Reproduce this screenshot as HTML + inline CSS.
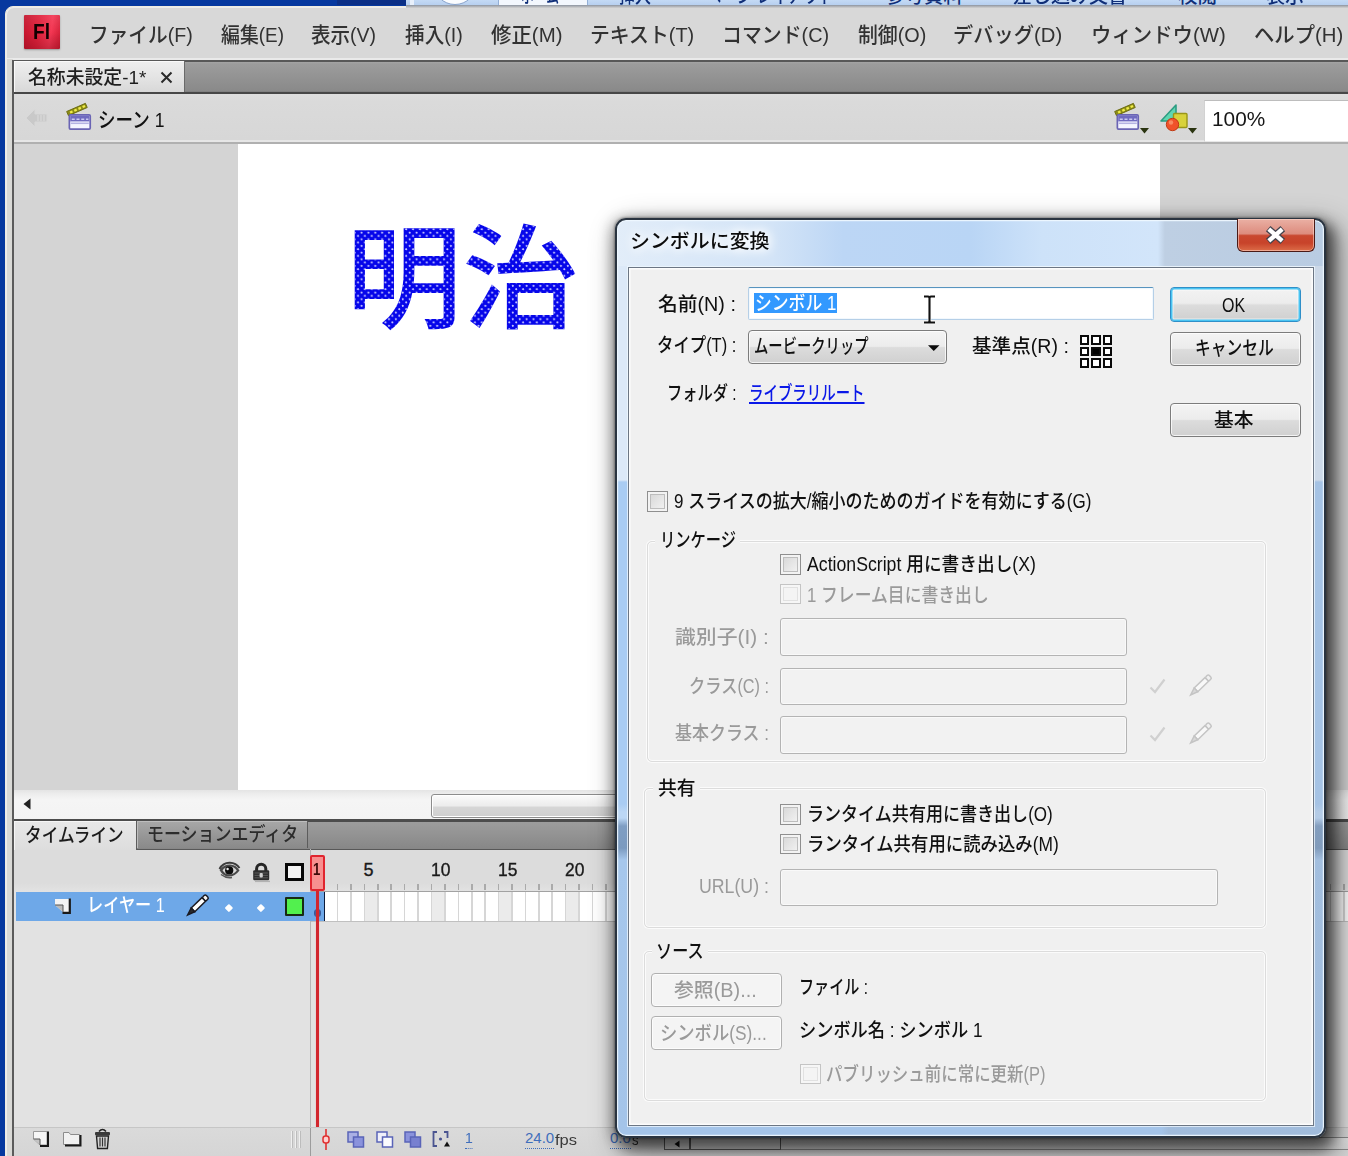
<!DOCTYPE html>
<html lang="ja"><head><meta charset="utf-8"><title>Flash</title>
<style>
html,body{margin:0;padding:0}
body{width:1348px;height:1156px;overflow:hidden;position:relative;background:#06389f;font-family:"Liberation Sans","Noto Sans CJK JP",sans-serif}
div{position:absolute;box-sizing:border-box}
svg{position:absolute;overflow:visible}
span.t{font-weight:500;position:absolute;white-space:pre;transform-origin:0 50%;display:block}
.btn{border:1.3px solid #7c7c7c;border-radius:4px;background:linear-gradient(#f4f4f4 0%,#ececec 48%,#dcdcdc 52%,#d0d0d0 100%);box-shadow:inset 0 0 0 1px rgba(255,255,255,.75)}
.inp{border:1.6px solid #b4b4b4;border-radius:3px;background:#f2f2f2;box-shadow:inset 0 0 0 1px #f9f9f9}
.chk{border:1px solid #8f8f8f;background:linear-gradient(135deg,#d4d4d4,#f6f6f6);box-shadow:inset 0 0 0 2px #f3f3f3, inset 0 0 0 3px #bdbdbd}
.chk.dis{border-color:#c4c4c4;background:#f4f4f4;box-shadow:inset 0 0 0 2px #f6f6f6, inset 0 0 0 3px #e1e1e1}
.grp{border:1px solid #dcdcdc;border-radius:5px;box-shadow:inset 0 0 0 1px #fbfbfb, 0 0 0 1px #fbfbfb}

</style></head>
<body>
<div style="left:0px;top:0px;width:1348px;height:8px;overflow:hidden"><div style="left:337px;top:0px;width:69px;height:5px;background:#0b2f86"></div><div style="left:406px;top:0px;width:950px;height:5.5px;background:linear-gradient(#c4daf5,#b4cdee)"></div><div style="left:410px;top:0px;width:4px;height:5px;background:#e8f0fb"></div><div style="left:433px;top:-39px;width:44px;height:44px;background:#fafcff;border-radius:50%;border:1px solid #8aa4cc"></div><div style="left:498px;top:-20px;width:90px;height:30px;background:#f3f7fd;border:1px solid #93afd6;border-radius:3px"></div><span class="t " id="t0" style="left:521px;top:-16.7px;height:27px;line-height:27px;font-size:19.5px;color:#0f2e78;transform:scaleX(0.6552);">ホーム</span><span class="t " id="t1" style="left:619px;top:-16.7px;height:27px;line-height:27px;font-size:19.5px;color:#0f2e78;transform:scaleX(0.8205);">挿入</span><span class="t " id="t2" style="left:706px;top:-16.7px;height:27px;line-height:27px;font-size:19.5px;color:#0f2e78;transform:scaleX(0.7950);">ページ レイアウト</span><span class="t " id="t3" style="left:885px;top:-16.7px;height:27px;line-height:27px;font-size:19.5px;color:#0f2e78;transform:scaleX(1.0000);">参考資料</span><span class="t " id="t4" style="left:1013px;top:-16.7px;height:27px;line-height:27px;font-size:19.5px;color:#0f2e78;transform:scaleX(0.9744);">差し込み文書</span><span class="t " id="t5" style="left:1178px;top:-16.7px;height:27px;line-height:27px;font-size:19.5px;color:#0f2e78;transform:scaleX(1.0000);">校閲</span><span class="t " id="t6" style="left:1266px;top:-16.7px;height:27px;line-height:27px;font-size:19.5px;color:#0f2e78;transform:scaleX(0.9744);">表示</span></div>
<div style="left:5.3px;top:5.8px;width:1400px;height:1200px;background:#d8d8d8;border-radius:8px 0 0 0;border:1.4px solid #efebe0;box-shadow:inset 1px 1px 0 #ececec"></div><div style="left:406px;top:5.4px;width:950px;height:2.8px;background:linear-gradient(#8c94a0,#b4b6ba 55%,#d2d2d2)"></div><div style="left:23.7px;top:14.8px;width:36.5px;height:34.6px;background:linear-gradient(rgba(255,255,255,.08),rgba(0,0,0,0) 50%,rgba(90,0,10,.28)),linear-gradient(98deg,#c2142c 0,#e0223c 40%,#f43854 72%,#d01c34 100%);box-shadow:0 1px 2px rgba(0,0,0,.3);border-radius:1px"></div><span class="t " id="t7" style="left:32.6px;top:16.1px;height:31px;line-height:31px;font-size:22.5px;color:#120000;transform:scaleX(0.8500);font-weight:bold">Fl</span><span class="t " id="t8" style="left:89px;top:20px;height:29px;line-height:29px;font-size:21px;color:#323232;transform:scaleX(0.9369);">ファイル(F)</span><span class="t " id="t9" style="left:221px;top:20px;height:29px;line-height:29px;font-size:21px;color:#323232;transform:scaleX(0.9000);">編集(E)</span><span class="t " id="t10" style="left:311px;top:20px;height:29px;line-height:29px;font-size:21px;color:#323232;transform:scaleX(0.9286);">表示(V)</span><span class="t " id="t11" style="left:405px;top:20px;height:29px;line-height:29px;font-size:21px;color:#323232;transform:scaleX(0.9355);">挿入(I)</span><span class="t " id="t12" style="left:491px;top:20px;height:29px;line-height:29px;font-size:21px;color:#323232;transform:scaleX(0.9726);">修正(M)</span><span class="t " id="t13" style="left:590px;top:20px;height:29px;line-height:29px;font-size:21px;color:#323232;transform:scaleX(0.9455);">テキスト(T)</span><span class="t " id="t14" style="left:722px;top:20px;height:29px;line-height:29px;font-size:21px;color:#323232;transform:scaleX(0.9469);">コマンド(C)</span><span class="t " id="t15" style="left:858px;top:20px;height:29px;line-height:29px;font-size:21px;color:#323232;transform:scaleX(0.9444);">制御(O)</span><span class="t " id="t16" style="left:953px;top:20px;height:29px;line-height:29px;font-size:21px;color:#323232;transform:scaleX(0.9646);">デバッグ(D)</span><span class="t " id="t17" style="left:1091px;top:20px;height:29px;line-height:29px;font-size:21px;color:#323232;transform:scaleX(0.9712);">ウィンドウ(W)</span><span class="t " id="t18" style="left:1254px;top:20px;height:29px;line-height:29px;font-size:21px;color:#323232;transform:scaleX(0.9674);">ヘルプ(H)</span><div style="left:7px;top:57.5px;width:1400px;height:36.5px;background:linear-gradient(#eaeaea 0,#eaeaea 2px,#585858 2.2px,#585858 3.8px,#a4a4a4 4.2px,#9c9c9c 6px,#898989 33.4px,#474747 34.2px,#474747 36.5px)"></div><div style="left:7px;top:59px;width:6px;height:1100px;background:#d9d9d6"></div><div style="left:12px;top:60px;width:2px;height:1100px;background:#5b5b5b"></div><div style="left:14px;top:61.3px;width:171px;height:31px;background:linear-gradient(#efefef,#e2e2e2 60%,#d8d8d8);border-right:1px solid #6a6a6a;box-shadow:inset 1px 1px 0 #fafafa"></div><span class="t " id="t19" style="left:28px;top:64px;height:27px;line-height:27px;font-size:19px;color:#1e1e1e;transform:scaleX(0.9916);">名称未設定-1*</span><svg style="left:160px;top:71px" width="13" height="13" viewBox="0 0 13 13"><path d="M1.5 1.5 L11.5 11.5 M11.5 1.5 L1.5 11.5" stroke="#2a2a2a" stroke-width="2" fill="none"/></svg><div style="left:14px;top:94px;width:1400px;height:49.5px;background:linear-gradient(#dedede 0,#dadada 8px,#d7d7d7 45.5px,#e6e6e6 46px,#e6e6e6 47.5px,#b0b0b0 47.8px,#b0b0b0 49.5px)"></div><svg style="left:25px;top:106.8px" width="24" height="22" viewBox="0 0 24 22"><path d="M1 11 L10 2 L10 7 L22 7 L22 15 L10 15 L10 20 Z" fill="#c9c9c9" stroke="#d8d8d8" stroke-width="1"/><path d="M13 8v6M16 8v6M19 8v6" stroke="#dcdcdc" stroke-width="1"/></svg><svg style="left:66.5px;top:103px" width="25.6" height="27.5" viewBox="0 0 27 29"><g transform="rotate(-23.5 2 13.4)"><rect x="1.6" y="8.4" width="21.6" height="4.8" fill="#8c8c16" stroke="#6a6a0e" stroke-width=".9"/><path d="M4.5 10.8h2.8M9.3 10.8h2.8M14.1 10.8h2.8M18.9 10.8h2.8" stroke="#f0ec48" stroke-width="2.4"/></g><rect x="2.5" y="12.5" width="22" height="15" rx="1.2" fill="#f4f4ff" stroke="#6a64b4" stroke-width="1.8"/><rect x="3.4" y="13.2" width="20.2" height="6.2" fill="#6f6ac0"/><path d="M5 17.2h3.2M10 17.2h3.2M15 17.2h3.2M20 17.2h2.6" stroke="#c9c8f0" stroke-width="1.6"/><rect x="4" y="20.6" width="19" height="1.6" fill="#b4b2e2"/></svg><span class="t " id="t20" style="left:98px;top:105px;height:29px;line-height:29px;font-size:21px;color:#111;transform:scaleX(0.8354);">シーン 1</span><svg style="left:1114.6px;top:103.4px" width="25.6" height="27.5" viewBox="0 0 27 29"><g transform="rotate(-23.5 2 13.4)"><rect x="1.6" y="8.4" width="21.6" height="4.8" fill="#8c8c16" stroke="#6a6a0e" stroke-width=".9"/><path d="M4.5 10.8h2.8M9.3 10.8h2.8M14.1 10.8h2.8M18.9 10.8h2.8" stroke="#f0ec48" stroke-width="2.4"/></g><rect x="2.5" y="12.5" width="22" height="15" rx="1.2" fill="#f4f4ff" stroke="#6a64b4" stroke-width="1.8"/><rect x="3.4" y="13.2" width="20.2" height="6.2" fill="#6f6ac0"/><path d="M5 17.2h3.2M10 17.2h3.2M15 17.2h3.2M20 17.2h2.6" stroke="#c9c8f0" stroke-width="1.6"/><rect x="4" y="20.6" width="19" height="1.6" fill="#b4b2e2"/></svg><svg style="left:1140px;top:128px" width="9" height="6" viewBox="0 0 9 6"><path d="M0 0h9L4.5 5.5z" fill="#2a3410"/></svg><svg style="left:1159px;top:103px" width="32" height="30" viewBox="0 0 32 30"><path d="M2 18 L17 2 L17 18 Z" fill="#5fd6b0" stroke="#2d9c82" stroke-width="1.6" stroke-linejoin="round"/><rect x="14.5" y="10.5" width="13.5" height="14" rx="1" fill="#d8d23a" stroke="#9a9618" stroke-width="1.4"/><circle cx="13.5" cy="21.5" r="6.2" fill="#f0522a" stroke="#c03a14" stroke-width="1"/><circle cx="12" cy="19.5" r="2.2" fill="#fb9a70" opacity=".8"/></svg><svg style="left:1188px;top:128px" width="9" height="6" viewBox="0 0 9 6"><path d="M0 0h9L4.5 5.5z" fill="#2a3410"/></svg><div style="left:1204px;top:100px;width:200px;height:42px;background:#fff;border:1px solid #e8e8e8;border-top-color:#bdbdbd;border-left-color:#d2d2d2"></div><span class="t " id="t21" style="left:1211.5px;top:104.3px;height:29px;line-height:29px;font-size:21px;color:#161616;transform:scaleX(0.9907);">100%</span><div style="left:14px;top:143.5px;width:1400px;height:646.5px;background:#d4d4d4"></div><div style="left:238px;top:143.5px;width:922px;height:646.5px;background:#fff"></div><span class="t " id="t22" style="left:346px;top:190.5px;height:158px;line-height:158px;font-size:112.5px;color:transparent;transform:scaleX(1.0333);background:radial-gradient(circle at 25% 25%,#d4d4ff 0,#d4d4ff 0.55px,rgba(190,190,255,0) 1.35px) 0 0/6.66px 6.66px,radial-gradient(circle at 75% 75%,#d4d4ff 0,#d4d4ff 0.55px,rgba(190,190,255,0) 1.35px) 0 0/6.66px 6.66px,#0606ea;-webkit-background-clip:text;background-clip:text;font-family:'Noto Sans CJK JP',sans-serif;font-weight:500">明治</span><div style="left:14px;top:790px;width:1400px;height:29px;background:linear-gradient(#e4e4e4 0,#ededed 4px,#f5f5f5 10px,#f3f3f3 100%)"></div><svg style="left:23px;top:798px" width="8" height="12" viewBox="0 0 8 12"><path d="M7.5 0.5 L7.5 11.5 L0.5 6 Z" fill="#222"/></svg><div style="left:431px;top:794px;width:860px;height:24px;background:linear-gradient(#fbfbfb,#ececec 50%,#d6d6d6 55%,#cfcfcf);border:1px solid #8c8c8c;border-radius:3px;box-shadow:inset 0 0 0 1px #fff"></div><div style="left:14px;top:818.5px;width:1400px;height:31.8px;background:linear-gradient(#4c4c4c 0,#4c4c4c 2.6px,#9c9c9c 3.4px,#939393 50%,#878787 29.6px,#585858 30.2px,#585858 31.8px)"></div><div style="left:14px;top:820.7px;width:123px;height:29.8px;background:linear-gradient(#e8e8e8,#dddddd);box-shadow:inset 1px 1px 0 #f6f6f6;border-right:1px solid #5c5c5c"></div><span class="t " id="t23" style="left:25px;top:821.5px;height:27px;line-height:27px;font-size:19px;color:#1c1c1c;transform:scaleX(0.8761);">タイムライン</span><div style="left:137px;top:820.7px;width:171px;height:27.5px;background:linear-gradient(#a8a8a8,#959595 60%,#8a8a8a);border-right:1px solid #5c5c5c;box-shadow:inset 1px 1px 0 #bdbdbd"></div><span class="t " id="t24" style="left:147px;top:821px;height:27px;line-height:27px;font-size:19px;color:#2c2c2c;transform:scaleX(0.8935);">モーションエディタ</span><div style="left:14px;top:850.3px;width:1400px;height:41.7px;background:linear-gradient(#dcdcdc 0,#dcdcdc 33px,#e2e2e2 41px)"></div><div style="left:14px;top:892px;width:1400px;height:235px;background:#e2e2e2"></div><svg style="left:218px;top:861px" width="23" height="18" viewBox="0 0 23 18"><path d="M1.5 8 Q5 1.5 12 1.8 Q18 2 21.5 7" stroke="#3c3c3c" stroke-width="2" fill="none"/><path d="M1.5 9 Q6 3.5 12 3.6 Q18 3.8 21.5 9.5 Q17 15.5 11 15.6 Q5 15.5 1.5 9Z" fill="#484848"/><path d="M4.5 9.3 Q8 5.6 12 5.6 Q16 5.8 18.8 9.6 Q15.5 13.6 11.2 13.6 Q7 13.4 4.5 9.3Z" fill="#d8d8d8"/><circle cx="11.2" cy="9.4" r="4.1" fill="#0c0c0c"/><circle cx="9.6" cy="8" r="1.2" fill="#e8e8e8"/><path d="M3 13.5 Q8 17.5 14 16.5" stroke="#555" stroke-width="1.4" fill="none"/></svg><svg style="left:252px;top:861.5px" width="19" height="20" viewBox="0 0 19 20"><path d="M4.6 9 V6.8 a4.6 4.6 0 0 1 9.2 0 V9" fill="none" stroke="#262626" stroke-width="3"/><rect x="1.2" y="8.2" width="16" height="10" rx="1.2" fill="#2e2e2e"/><path d="M2.5 11h13.4M2.5 13.4h13.4M2.5 15.8h13.4" stroke="#5c5c5c" stroke-width="1"/><rect x="7.6" y="11" width="3.2" height="4.6" rx="1" fill="#d0d0d0"/><path d="M3 19.4h15" stroke="#a8a8a8" stroke-width="1.4" opacity=".8"/></svg><div style="left:285px;top:863.3px;width:18.6px;height:17.6px;border:3.6px solid #080808;background:#f4f4f4"></div><div style="left:323.32px;top:883.8px;width:1.6px;height:6.4px;background:#aaaaaa"></div><div style="left:336.74px;top:883.8px;width:1.6px;height:6.4px;background:#aaaaaa"></div><div style="left:350.16px;top:883.8px;width:1.6px;height:6.4px;background:#aaaaaa"></div><div style="left:363.58px;top:883.8px;width:1.6px;height:6.4px;background:#aaaaaa"></div><div style="left:377px;top:883.8px;width:1.6px;height:6.4px;background:#aaaaaa"></div><div style="left:390.42px;top:883.8px;width:1.6px;height:6.4px;background:#aaaaaa"></div><div style="left:403.84px;top:883.8px;width:1.6px;height:6.4px;background:#aaaaaa"></div><div style="left:417.26px;top:883.8px;width:1.6px;height:6.4px;background:#aaaaaa"></div><div style="left:430.68px;top:883.8px;width:1.6px;height:6.4px;background:#aaaaaa"></div><div style="left:444.1px;top:883.8px;width:1.6px;height:6.4px;background:#aaaaaa"></div><div style="left:457.52px;top:883.8px;width:1.6px;height:6.4px;background:#aaaaaa"></div><div style="left:470.94px;top:883.8px;width:1.6px;height:6.4px;background:#aaaaaa"></div><div style="left:484.36px;top:883.8px;width:1.6px;height:6.4px;background:#aaaaaa"></div><div style="left:497.78px;top:883.8px;width:1.6px;height:6.4px;background:#aaaaaa"></div><div style="left:511.2px;top:883.8px;width:1.6px;height:6.4px;background:#aaaaaa"></div><div style="left:524.62px;top:883.8px;width:1.6px;height:6.4px;background:#aaaaaa"></div><div style="left:538.04px;top:883.8px;width:1.6px;height:6.4px;background:#aaaaaa"></div><div style="left:551.46px;top:883.8px;width:1.6px;height:6.4px;background:#aaaaaa"></div><div style="left:564.88px;top:883.8px;width:1.6px;height:6.4px;background:#aaaaaa"></div><div style="left:578.3px;top:883.8px;width:1.6px;height:6.4px;background:#aaaaaa"></div><div style="left:591.72px;top:883.8px;width:1.6px;height:6.4px;background:#aaaaaa"></div><div style="left:605.14px;top:883.8px;width:1.6px;height:6.4px;background:#aaaaaa"></div><div style="left:618.56px;top:883.8px;width:1.6px;height:6.4px;background:#aaaaaa"></div><div style="left:631.98px;top:883.8px;width:1.6px;height:6.4px;background:#aaaaaa"></div><div style="left:645.4px;top:883.8px;width:1.6px;height:6.4px;background:#aaaaaa"></div><div style="left:658.82px;top:883.8px;width:1.6px;height:6.4px;background:#aaaaaa"></div><div style="left:672.24px;top:883.8px;width:1.6px;height:6.4px;background:#aaaaaa"></div><div style="left:685.66px;top:883.8px;width:1.6px;height:6.4px;background:#aaaaaa"></div><div style="left:699.08px;top:883.8px;width:1.6px;height:6.4px;background:#aaaaaa"></div><div style="left:712.5px;top:883.8px;width:1.6px;height:6.4px;background:#aaaaaa"></div><div style="left:725.92px;top:883.8px;width:1.6px;height:6.4px;background:#aaaaaa"></div><div style="left:739.34px;top:883.8px;width:1.6px;height:6.4px;background:#aaaaaa"></div><div style="left:752.76px;top:883.8px;width:1.6px;height:6.4px;background:#aaaaaa"></div><div style="left:766.18px;top:883.8px;width:1.6px;height:6.4px;background:#aaaaaa"></div><div style="left:779.6px;top:883.8px;width:1.6px;height:6.4px;background:#aaaaaa"></div><div style="left:793.02px;top:883.8px;width:1.6px;height:6.4px;background:#aaaaaa"></div><div style="left:806.44px;top:883.8px;width:1.6px;height:6.4px;background:#aaaaaa"></div><div style="left:819.86px;top:883.8px;width:1.6px;height:6.4px;background:#aaaaaa"></div><div style="left:833.28px;top:883.8px;width:1.6px;height:6.4px;background:#aaaaaa"></div><div style="left:846.7px;top:883.8px;width:1.6px;height:6.4px;background:#aaaaaa"></div><div style="left:860.12px;top:883.8px;width:1.6px;height:6.4px;background:#aaaaaa"></div><div style="left:873.54px;top:883.8px;width:1.6px;height:6.4px;background:#aaaaaa"></div><div style="left:886.96px;top:883.8px;width:1.6px;height:6.4px;background:#aaaaaa"></div><div style="left:900.38px;top:883.8px;width:1.6px;height:6.4px;background:#aaaaaa"></div><div style="left:913.8px;top:883.8px;width:1.6px;height:6.4px;background:#aaaaaa"></div><div style="left:927.22px;top:883.8px;width:1.6px;height:6.4px;background:#aaaaaa"></div><div style="left:940.64px;top:883.8px;width:1.6px;height:6.4px;background:#aaaaaa"></div><div style="left:954.06px;top:883.8px;width:1.6px;height:6.4px;background:#aaaaaa"></div><div style="left:967.48px;top:883.8px;width:1.6px;height:6.4px;background:#aaaaaa"></div><div style="left:980.9px;top:883.8px;width:1.6px;height:6.4px;background:#aaaaaa"></div><div style="left:994.32px;top:883.8px;width:1.6px;height:6.4px;background:#aaaaaa"></div><div style="left:1007.74px;top:883.8px;width:1.6px;height:6.4px;background:#aaaaaa"></div><div style="left:1021.16px;top:883.8px;width:1.6px;height:6.4px;background:#aaaaaa"></div><div style="left:1034.58px;top:883.8px;width:1.6px;height:6.4px;background:#aaaaaa"></div><div style="left:1048px;top:883.8px;width:1.6px;height:6.4px;background:#aaaaaa"></div><div style="left:1061.42px;top:883.8px;width:1.6px;height:6.4px;background:#aaaaaa"></div><div style="left:1074.84px;top:883.8px;width:1.6px;height:6.4px;background:#aaaaaa"></div><div style="left:1088.26px;top:883.8px;width:1.6px;height:6.4px;background:#aaaaaa"></div><div style="left:1101.68px;top:883.8px;width:1.6px;height:6.4px;background:#aaaaaa"></div><div style="left:1115.1px;top:883.8px;width:1.6px;height:6.4px;background:#aaaaaa"></div><div style="left:1128.52px;top:883.8px;width:1.6px;height:6.4px;background:#aaaaaa"></div><div style="left:1141.94px;top:883.8px;width:1.6px;height:6.4px;background:#aaaaaa"></div><div style="left:1155.36px;top:883.8px;width:1.6px;height:6.4px;background:#aaaaaa"></div><div style="left:1168.78px;top:883.8px;width:1.6px;height:6.4px;background:#aaaaaa"></div><div style="left:1182.2px;top:883.8px;width:1.6px;height:6.4px;background:#aaaaaa"></div><div style="left:1195.62px;top:883.8px;width:1.6px;height:6.4px;background:#aaaaaa"></div><div style="left:1209.04px;top:883.8px;width:1.6px;height:6.4px;background:#aaaaaa"></div><div style="left:1222.46px;top:883.8px;width:1.6px;height:6.4px;background:#aaaaaa"></div><div style="left:1235.88px;top:883.8px;width:1.6px;height:6.4px;background:#aaaaaa"></div><div style="left:1249.3px;top:883.8px;width:1.6px;height:6.4px;background:#aaaaaa"></div><div style="left:1262.72px;top:883.8px;width:1.6px;height:6.4px;background:#aaaaaa"></div><div style="left:1276.14px;top:883.8px;width:1.6px;height:6.4px;background:#aaaaaa"></div><div style="left:1289.56px;top:883.8px;width:1.6px;height:6.4px;background:#aaaaaa"></div><div style="left:1302.98px;top:883.8px;width:1.6px;height:6.4px;background:#aaaaaa"></div><div style="left:1316.4px;top:883.8px;width:1.6px;height:6.4px;background:#aaaaaa"></div><div style="left:1329.82px;top:883.8px;width:1.6px;height:6.4px;background:#aaaaaa"></div><div style="left:1343.24px;top:883.8px;width:1.6px;height:6.4px;background:#aaaaaa"></div><div style="left:1356.66px;top:883.8px;width:1.6px;height:6.4px;background:#aaaaaa"></div><div style="left:1370.08px;top:883.8px;width:1.6px;height:6.4px;background:#aaaaaa"></div><div style="left:1383.5px;top:883.8px;width:1.6px;height:6.4px;background:#aaaaaa"></div><div style="left:1396.92px;top:883.8px;width:1.6px;height:6.4px;background:#aaaaaa"></div><div style="left:1410.34px;top:883.8px;width:1.6px;height:6.4px;background:#aaaaaa"></div><div style="left:1423.76px;top:883.8px;width:1.6px;height:6.4px;background:#aaaaaa"></div><div style="left:1437.18px;top:883.8px;width:1.6px;height:6.4px;background:#aaaaaa"></div><div style="left:1450.6px;top:883.8px;width:1.6px;height:6.4px;background:#aaaaaa"></div><div style="left:1464.02px;top:883.8px;width:1.6px;height:6.4px;background:#aaaaaa"></div><div style="left:1477.44px;top:883.8px;width:1.6px;height:6.4px;background:#aaaaaa"></div><div style="left:1490.86px;top:883.8px;width:1.6px;height:6.4px;background:#aaaaaa"></div><div style="left:1504.28px;top:883.8px;width:1.6px;height:6.4px;background:#aaaaaa"></div><span class="t " id="t25" style="left:363.58px;top:857.5px;height:25px;line-height:25px;font-size:18px;color:#1a1a1a;transform:scaleX(1.0000);-webkit-text-stroke:0.35px #1a1a1a">5</span><span class="t " id="t26" style="left:430.68px;top:857.5px;height:25px;line-height:25px;font-size:18px;color:#1a1a1a;transform:scaleX(0.9700);-webkit-text-stroke:0.35px #1a1a1a">10</span><span class="t " id="t27" style="left:497.78px;top:857.5px;height:25px;line-height:25px;font-size:18px;color:#1a1a1a;transform:scaleX(0.9700);-webkit-text-stroke:0.35px #1a1a1a">15</span><span class="t " id="t28" style="left:564.88px;top:857.5px;height:25px;line-height:25px;font-size:18px;color:#1a1a1a;transform:scaleX(0.9700);-webkit-text-stroke:0.35px #1a1a1a">20</span><div style="left:310.3px;top:849px;width:1px;height:279px;background:#b6b6b6"></div><div style="left:16px;top:891.7px;width:294.6px;height:29.8px;background:#6ea8e8"></div><svg style="left:54px;top:896px" width="19" height="19" viewBox="0 0 19 19"><path d="M1 3 H15 V16 H9 L1 9 Z" fill="#f4f4f4" stroke="none"/><path d="M15.8 2.5 V16.8 H8.5" stroke="#1a1a1a" stroke-width="2.2" fill="none"/><path d="M1 9 H9 V16 Z" fill="#b9b9b9"/><path d="M1 9 L9 9 L9 16" stroke="#555" stroke-width="1" fill="none"/></svg><span class="t " id="t29" style="left:87px;top:892px;height:27px;line-height:27px;font-size:19.5px;color:#ffffff;transform:scaleX(0.8298);">レイヤー 1</span><svg style="left:184px;top:893px" width="26" height="26" viewBox="0 0 26 26"><g transform="rotate(46 13 13)"><rect x="10.4" y="-1" width="5.2" height="4.6" rx="1.6" fill="#f4f4f4" stroke="#1a1a22" stroke-width="1.5"/><rect x="10.4" y="3.6" width="5.2" height="15" fill="#ffffff" stroke="#1a1a22" stroke-width="1.5"/><path d="M10.4 18.6 L13 26 L15.6 18.6Z" fill="#2a2a2a" stroke="#1a1a22" stroke-width="1.5"/></g></svg><div style="left:226.1px;top:904.7px;width:5.8px;height:5.8px;background:#fff;transform:rotate(45deg);border-radius:1px"></div><div style="left:258.1px;top:904.7px;width:5.8px;height:5.8px;background:#fff;transform:rotate(45deg);border-radius:1px"></div><div style="left:285px;top:897.4px;width:18.6px;height:18.4px;background:#52f04e;border:2px solid #182a14;border-radius:1px"></div><div style="left:311px;top:890.5px;width:1100px;height:31px;background:#fff;border-top:1.8px solid #a2a2a2;border-bottom:1px solid #c0c0c0"></div><div style="left:364.38px;top:892.3px;width:13.42px;height:28.4px;background:#ebebeb"></div><div style="left:431.48px;top:892.3px;width:13.42px;height:28.4px;background:#ebebeb"></div><div style="left:498.58px;top:892.3px;width:13.42px;height:28.4px;background:#ebebeb"></div><div style="left:565.68px;top:892.3px;width:13.42px;height:28.4px;background:#ebebeb"></div><div style="left:632.78px;top:892.3px;width:13.42px;height:28.4px;background:#ebebeb"></div><div style="left:699.88px;top:892.3px;width:13.42px;height:28.4px;background:#ebebeb"></div><div style="left:766.98px;top:892.3px;width:13.42px;height:28.4px;background:#ebebeb"></div><div style="left:834.08px;top:892.3px;width:13.42px;height:28.4px;background:#ebebeb"></div><div style="left:901.18px;top:892.3px;width:13.42px;height:28.4px;background:#ebebeb"></div><div style="left:968.28px;top:892.3px;width:13.42px;height:28.4px;background:#ebebeb"></div><div style="left:1035.38px;top:892.3px;width:13.42px;height:28.4px;background:#ebebeb"></div><div style="left:1102.48px;top:892.3px;width:13.42px;height:28.4px;background:#ebebeb"></div><div style="left:1169.58px;top:892.3px;width:13.42px;height:28.4px;background:#ebebeb"></div><div style="left:1236.68px;top:892.3px;width:13.42px;height:28.4px;background:#ebebeb"></div><div style="left:1303.78px;top:892.3px;width:13.42px;height:28.4px;background:#ebebeb"></div><div style="left:1370.88px;top:892.3px;width:13.42px;height:28.4px;background:#ebebeb"></div><div style="left:1437.98px;top:892.3px;width:13.42px;height:28.4px;background:#ebebeb"></div><div style="left:1505.08px;top:892.3px;width:13.42px;height:28.4px;background:#ebebeb"></div><div style="left:323.32px;top:892.3px;width:1.6px;height:28.4px;background:#d6d6d6"></div><div style="left:336.74px;top:892.3px;width:1.6px;height:28.4px;background:#d6d6d6"></div><div style="left:350.16px;top:892.3px;width:1.6px;height:28.4px;background:#d6d6d6"></div><div style="left:363.58px;top:892.3px;width:1.6px;height:28.4px;background:#d6d6d6"></div><div style="left:377px;top:892.3px;width:1.6px;height:28.4px;background:#d6d6d6"></div><div style="left:390.42px;top:892.3px;width:1.6px;height:28.4px;background:#d6d6d6"></div><div style="left:403.84px;top:892.3px;width:1.6px;height:28.4px;background:#d6d6d6"></div><div style="left:417.26px;top:892.3px;width:1.6px;height:28.4px;background:#d6d6d6"></div><div style="left:430.68px;top:892.3px;width:1.6px;height:28.4px;background:#d6d6d6"></div><div style="left:444.1px;top:892.3px;width:1.6px;height:28.4px;background:#d6d6d6"></div><div style="left:457.52px;top:892.3px;width:1.6px;height:28.4px;background:#d6d6d6"></div><div style="left:470.94px;top:892.3px;width:1.6px;height:28.4px;background:#d6d6d6"></div><div style="left:484.36px;top:892.3px;width:1.6px;height:28.4px;background:#d6d6d6"></div><div style="left:497.78px;top:892.3px;width:1.6px;height:28.4px;background:#d6d6d6"></div><div style="left:511.2px;top:892.3px;width:1.6px;height:28.4px;background:#d6d6d6"></div><div style="left:524.62px;top:892.3px;width:1.6px;height:28.4px;background:#d6d6d6"></div><div style="left:538.04px;top:892.3px;width:1.6px;height:28.4px;background:#d6d6d6"></div><div style="left:551.46px;top:892.3px;width:1.6px;height:28.4px;background:#d6d6d6"></div><div style="left:564.88px;top:892.3px;width:1.6px;height:28.4px;background:#d6d6d6"></div><div style="left:578.3px;top:892.3px;width:1.6px;height:28.4px;background:#d6d6d6"></div><div style="left:591.72px;top:892.3px;width:1.6px;height:28.4px;background:#d6d6d6"></div><div style="left:605.14px;top:892.3px;width:1.6px;height:28.4px;background:#d6d6d6"></div><div style="left:618.56px;top:892.3px;width:1.6px;height:28.4px;background:#d6d6d6"></div><div style="left:631.98px;top:892.3px;width:1.6px;height:28.4px;background:#d6d6d6"></div><div style="left:645.4px;top:892.3px;width:1.6px;height:28.4px;background:#d6d6d6"></div><div style="left:658.82px;top:892.3px;width:1.6px;height:28.4px;background:#d6d6d6"></div><div style="left:672.24px;top:892.3px;width:1.6px;height:28.4px;background:#d6d6d6"></div><div style="left:685.66px;top:892.3px;width:1.6px;height:28.4px;background:#d6d6d6"></div><div style="left:699.08px;top:892.3px;width:1.6px;height:28.4px;background:#d6d6d6"></div><div style="left:712.5px;top:892.3px;width:1.6px;height:28.4px;background:#d6d6d6"></div><div style="left:725.92px;top:892.3px;width:1.6px;height:28.4px;background:#d6d6d6"></div><div style="left:739.34px;top:892.3px;width:1.6px;height:28.4px;background:#d6d6d6"></div><div style="left:752.76px;top:892.3px;width:1.6px;height:28.4px;background:#d6d6d6"></div><div style="left:766.18px;top:892.3px;width:1.6px;height:28.4px;background:#d6d6d6"></div><div style="left:779.6px;top:892.3px;width:1.6px;height:28.4px;background:#d6d6d6"></div><div style="left:793.02px;top:892.3px;width:1.6px;height:28.4px;background:#d6d6d6"></div><div style="left:806.44px;top:892.3px;width:1.6px;height:28.4px;background:#d6d6d6"></div><div style="left:819.86px;top:892.3px;width:1.6px;height:28.4px;background:#d6d6d6"></div><div style="left:833.28px;top:892.3px;width:1.6px;height:28.4px;background:#d6d6d6"></div><div style="left:846.7px;top:892.3px;width:1.6px;height:28.4px;background:#d6d6d6"></div><div style="left:860.12px;top:892.3px;width:1.6px;height:28.4px;background:#d6d6d6"></div><div style="left:873.54px;top:892.3px;width:1.6px;height:28.4px;background:#d6d6d6"></div><div style="left:886.96px;top:892.3px;width:1.6px;height:28.4px;background:#d6d6d6"></div><div style="left:900.38px;top:892.3px;width:1.6px;height:28.4px;background:#d6d6d6"></div><div style="left:913.8px;top:892.3px;width:1.6px;height:28.4px;background:#d6d6d6"></div><div style="left:927.22px;top:892.3px;width:1.6px;height:28.4px;background:#d6d6d6"></div><div style="left:940.64px;top:892.3px;width:1.6px;height:28.4px;background:#d6d6d6"></div><div style="left:954.06px;top:892.3px;width:1.6px;height:28.4px;background:#d6d6d6"></div><div style="left:967.48px;top:892.3px;width:1.6px;height:28.4px;background:#d6d6d6"></div><div style="left:980.9px;top:892.3px;width:1.6px;height:28.4px;background:#d6d6d6"></div><div style="left:994.32px;top:892.3px;width:1.6px;height:28.4px;background:#d6d6d6"></div><div style="left:1007.74px;top:892.3px;width:1.6px;height:28.4px;background:#d6d6d6"></div><div style="left:1021.16px;top:892.3px;width:1.6px;height:28.4px;background:#d6d6d6"></div><div style="left:1034.58px;top:892.3px;width:1.6px;height:28.4px;background:#d6d6d6"></div><div style="left:1048px;top:892.3px;width:1.6px;height:28.4px;background:#d6d6d6"></div><div style="left:1061.42px;top:892.3px;width:1.6px;height:28.4px;background:#d6d6d6"></div><div style="left:1074.84px;top:892.3px;width:1.6px;height:28.4px;background:#d6d6d6"></div><div style="left:1088.26px;top:892.3px;width:1.6px;height:28.4px;background:#d6d6d6"></div><div style="left:1101.68px;top:892.3px;width:1.6px;height:28.4px;background:#d6d6d6"></div><div style="left:1115.1px;top:892.3px;width:1.6px;height:28.4px;background:#d6d6d6"></div><div style="left:1128.52px;top:892.3px;width:1.6px;height:28.4px;background:#d6d6d6"></div><div style="left:1141.94px;top:892.3px;width:1.6px;height:28.4px;background:#d6d6d6"></div><div style="left:1155.36px;top:892.3px;width:1.6px;height:28.4px;background:#d6d6d6"></div><div style="left:1168.78px;top:892.3px;width:1.6px;height:28.4px;background:#d6d6d6"></div><div style="left:1182.2px;top:892.3px;width:1.6px;height:28.4px;background:#d6d6d6"></div><div style="left:1195.62px;top:892.3px;width:1.6px;height:28.4px;background:#d6d6d6"></div><div style="left:1209.04px;top:892.3px;width:1.6px;height:28.4px;background:#d6d6d6"></div><div style="left:1222.46px;top:892.3px;width:1.6px;height:28.4px;background:#d6d6d6"></div><div style="left:1235.88px;top:892.3px;width:1.6px;height:28.4px;background:#d6d6d6"></div><div style="left:1249.3px;top:892.3px;width:1.6px;height:28.4px;background:#d6d6d6"></div><div style="left:1262.72px;top:892.3px;width:1.6px;height:28.4px;background:#d6d6d6"></div><div style="left:1276.14px;top:892.3px;width:1.6px;height:28.4px;background:#d6d6d6"></div><div style="left:1289.56px;top:892.3px;width:1.6px;height:28.4px;background:#d6d6d6"></div><div style="left:1302.98px;top:892.3px;width:1.6px;height:28.4px;background:#d6d6d6"></div><div style="left:1316.4px;top:892.3px;width:1.6px;height:28.4px;background:#d6d6d6"></div><div style="left:1329.82px;top:892.3px;width:1.6px;height:28.4px;background:#d6d6d6"></div><div style="left:1343.24px;top:892.3px;width:1.6px;height:28.4px;background:#d6d6d6"></div><div style="left:1356.66px;top:892.3px;width:1.6px;height:28.4px;background:#d6d6d6"></div><div style="left:1370.08px;top:892.3px;width:1.6px;height:28.4px;background:#d6d6d6"></div><div style="left:1383.5px;top:892.3px;width:1.6px;height:28.4px;background:#d6d6d6"></div><div style="left:1396.92px;top:892.3px;width:1.6px;height:28.4px;background:#d6d6d6"></div><div style="left:1410.34px;top:892.3px;width:1.6px;height:28.4px;background:#d6d6d6"></div><div style="left:1423.76px;top:892.3px;width:1.6px;height:28.4px;background:#d6d6d6"></div><div style="left:1437.18px;top:892.3px;width:1.6px;height:28.4px;background:#d6d6d6"></div><div style="left:1450.6px;top:892.3px;width:1.6px;height:28.4px;background:#d6d6d6"></div><div style="left:1464.02px;top:892.3px;width:1.6px;height:28.4px;background:#d6d6d6"></div><div style="left:1477.44px;top:892.3px;width:1.6px;height:28.4px;background:#d6d6d6"></div><div style="left:1490.86px;top:892.3px;width:1.6px;height:28.4px;background:#d6d6d6"></div><div style="left:1504.28px;top:892.3px;width:1.6px;height:28.4px;background:#d6d6d6"></div><div style="left:311px;top:891.7px;width:14px;height:29.8px;background:#6ea8e8;border-right:1.7px solid #0c1c3c"></div><div style="left:313.5px;top:909.2px;width:7.8px;height:7.8px;border-radius:50%;background:#34508e;opacity:.9"></div><div style="left:316.4px;top:890px;width:2.2px;height:238px;background:#d2262e;box-shadow:0 0 1px #e88"></div><div style="left:310.1px;top:854.6px;width:15.1px;height:36px;background:#f78f8f;border:2px solid #e0242e;border-radius:2px"></div><span class="t " id="t30" style="left:313.2px;top:858.8px;height:22px;line-height:22px;font-size:16px;color:#3c0a0a;transform:scaleX(0.8222);font-weight:bold;font-family:"DejaVu Sans","Liberation Sans",sans-serif">1</span><div style="left:14px;top:1127px;width:1400px;height:30px;background:linear-gradient(#dadada,#d5d5d5);border-top:1px solid #c6c6c6"></div><svg style="left:31.5px;top:1129px" width="19" height="19" viewBox="0 0 19 19"><path d="M1.5 2.5H15V16H8L1.5 10Z" fill="#f6f6f6" stroke="#9a9a9a" stroke-width="1"/><path d="M16 2.5V17H8" stroke="#1a1a1a" stroke-width="2" fill="none"/><path d="M1.5 10H8V16" fill="#c4c4c4" stroke="#555" stroke-width="1"/></svg><svg style="left:62px;top:1129px" width="21" height="18" viewBox="0 0 21 18"><path d="M1.5 3.5 H7 L8.5 5.5 H17.5 V15.5 H1.5 Z" fill="#f1f1f1" stroke="#8c8c8c" stroke-width="1"/><path d="M18.5 6 V16.5 H3" stroke="#1a1a1a" stroke-width="2" fill="none"/></svg><svg style="left:93px;top:1128px" width="19" height="22" viewBox="0 0 19 22"><path d="M6 3.5 Q9.5 -0.5 13 3.5" stroke="#222" stroke-width="1.6" fill="none"/><rect x="2" y="4" width="15" height="3.2" rx="1" fill="#3a3a3a"/><path d="M3.5 8 L4.6 20.5 H14.4 L15.5 8 Z" fill="#d4d4d4" stroke="#222" stroke-width="1.4"/><path d="M7 9.5v9M9.5 9.5v9M12 9.5v9" stroke="#333" stroke-width="1.2"/></svg><div style="left:290.5px;top:1131px;width:2px;height:17px;background:linear-gradient(90deg,#efefef 0,#efefef 55%,#bcbcbc 56%)"></div><div style="left:294.5px;top:1131px;width:2px;height:17px;background:linear-gradient(90deg,#efefef 0,#efefef 55%,#bcbcbc 56%)"></div><div style="left:298.5px;top:1131px;width:2px;height:17px;background:linear-gradient(90deg,#efefef 0,#efefef 55%,#bcbcbc 56%)"></div><div style="left:310px;top:1128px;width:1px;height:28px;background:#9c9c9c"></div><svg style="left:321px;top:1129px" width="10" height="21" viewBox="0 0 10 21"><path d="M5 0V21" stroke="#e03030" stroke-width="1.6"/><rect x="2" y="7" width="6" height="7" rx="2.5" fill="#ffd0d0" stroke="#e03030" stroke-width="1.5"/></svg><svg style="left:347px;top:1131px" width="18" height="17" viewBox="0 0 18 17"><rect x="1" y="1" width="10" height="10" fill="#aab0e4" stroke="#5a64b8" stroke-width="1.5"/><rect x="6.5" y="6" width="10" height="10" fill="#8a92dc" stroke="#5a64b8" stroke-width="1.5"/></svg><svg style="left:376px;top:1131px" width="18" height="17" viewBox="0 0 18 17"><rect x="1" y="1" width="10" height="10" fill="#f0f0fa" stroke="#5a64b8" stroke-width="1.5"/><rect x="6.5" y="6" width="10" height="10" fill="#fafafe" stroke="#5a64b8" stroke-width="1.5"/></svg><svg style="left:404px;top:1131px" width="18" height="17" viewBox="0 0 18 17"><rect x="1" y="1" width="10" height="10" fill="#8a92dc" stroke="#5a64b8" stroke-width="1.5"/><rect x="6.5" y="6" width="10" height="10" fill="#7880d0" stroke="#5a64b8" stroke-width="1.5"/></svg><svg style="left:432px;top:1131px" width="19" height="17" viewBox="0 0 19 17"><path d="M5 1H1.5V15H5M12 1H15.5V7" stroke="#4a5490" stroke-width="1.8" fill="none"/><circle cx="8.5" cy="8" r="1.6" fill="#4a5490"/><path d="M12 15.5h6l-3 -5z" fill="#111"/></svg><span class="t " id="t31" style="left:465px;top:1128.5px;height:21px;line-height:21px;font-size:15px;color:#3f6ebc;transform:scaleX(0.9375);border-bottom:1px dotted #3f6ebc;line-height:18px;height:19px">1</span><span class="t " id="t32" style="left:525px;top:1128.5px;height:21px;line-height:21px;font-size:15px;color:#3f6ebc;transform:scaleX(1.0000);border-bottom:1px dotted #3f6ebc;line-height:18px;height:19px">24.0</span><span class="t " id="t33" style="left:555px;top:1128.5px;height:21px;line-height:21px;font-size:15px;color:#3a3a3a;transform:scaleX(1.1000);">fps</span><span class="t " id="t34" style="left:610px;top:1128.5px;height:21px;line-height:21px;font-size:15px;color:#3f6ebc;transform:scaleX(1.0000);border-bottom:1px dotted #3f6ebc;line-height:18px;height:19px">0.0</span><span class="t " id="t35" style="left:632px;top:1128.5px;height:21px;line-height:21px;font-size:15px;color:#333;transform:scaleX(0.8750);">s</span><div style="left:664px;top:1137px;width:700px;height:12.5px;background:linear-gradient(#e4e4e4,#d6d6d6);border-top:1px solid #8a8a8a;border-bottom:1px solid #8a8a8a"></div><div style="left:664px;top:1137px;width:26px;height:12.5px;background:linear-gradient(#f0f0f0,#d0d0d0);border:1px solid #5c5c5c"></div><svg style="left:674px;top:1139.5px" width="6" height="8" viewBox="0 0 6 8"><path d="M5.5 0.5V7.5L0.5 4Z" fill="#111"/></svg><div style="left:689.5px;top:1137px;width:91px;height:12.5px;background:linear-gradient(#f0f0f0,#d0d0d0);border:1px solid #5c5c5c"></div>
<div style="left:615.3px;top:218px;width:710.3px;height:919.6px;border-radius:11px;border:2.3px solid #2a3440;background:linear-gradient(90deg,#e2edf9 0,#d3e4f7 22%,#bcd6f5 32%,#b9d5f5 50%,#cde2f9 60%,#d2e5fa 76.5%,#becfe3 77.5%,#b9cce2 100%) 0 0/100% 46px no-repeat,linear-gradient(90deg,rgba(255,255,255,0) 0,rgba(255,255,255,0) 10px,rgba(255,255,255,0) 77%,rgba(150,160,175,.22) 78%,rgba(150,160,175,.22) 100%),linear-gradient(#dce9f8 0,#dce9f8 260px,#a9ccf3 262px,#a9ccf3 584px,#bcd7f5 592px,#bcd7f5 598px,#7f9ec3 606px,#7b9abf 628px,#a6c7ec 640px,#a4c4e9 100%);box-shadow:inset 0 0 0 1.2px rgba(240,248,255,.9),0 0 2px .5px rgba(0,0,0,.25),6px 8px 14px 3px rgba(0,0,0,.5),9px 12px 30px 6px rgba(0,0,0,.3),-2px 3px 14px 3px rgba(0,0,0,.2)"></div><span class="t " id="t36" style="left:630px;top:228px;height:27px;line-height:27px;font-size:19.5px;color:#0c0c0c;transform:scaleX(1.0219);text-shadow:0 0 8px #fff,0 0 12px #fff,0 0 14px rgba(255,255,255,.9)">シンボルに変換</span><div style="left:1236.5px;top:219px;width:78px;height:32.5px;border-radius:0 0 6px 6px;border:1.5px solid #4a1a16;border-top:none;background:linear-gradient(#eab0a4 0,#dd8c7e 46%,#c94830 52%,#c8432a 75%,#dc6c48 100%);box-shadow:inset 0 0 0 1px rgba(255,220,210,.55)"></div><svg style="left:1265px;top:226px" width="21" height="18" viewBox="0 0 21 18"><path d="M3.2 2.6 L17.8 15.4 M17.8 2.6 L3.2 15.4" stroke="#43434d" stroke-width="7" fill="none"/><path d="M3.8 3.1 L17.2 14.9 M17.2 3.1 L3.8 14.9" stroke="#fff" stroke-width="4.4" fill="none"/></svg><div style="left:628px;top:266.5px;width:686px;height:859px;background:#f0f0f0;border:1.3px solid #6c7684;box-shadow:0 0 0 1px rgba(240,248,255,.75),inset 0 0 0 1.6px #fcfcfc"></div><span class="t " id="t37" style="left:658px;top:291px;height:27px;line-height:27px;font-size:19.5px;color:#101010;transform:scaleX(1.0130);">名前(N) :</span><div style="left:747.5px;top:286.5px;width:406px;height:33.5px;background:#fff;border:1px solid #b5cfe7;border-top-color:#5794bf;border-radius:2px;box-shadow:inset 0 0 0 1px #f2f8fd"></div><div style="left:753.5px;top:292.5px;width:83.5px;height:20.5px;background:#3399ff"></div><span class="t " id="t38" style="left:755px;top:289.5px;height:27px;line-height:27px;font-size:19.5px;color:#ffffff;transform:scaleX(0.8617);">シンボル 1</span><svg style="left:923px;top:295px" width="13" height="29" viewBox="0 0 13 29"><path d="M1 1.5 H5 Q6.5 1.5 6.5 3 V26 Q6.5 27.5 5 27.5 H1 M12 1.5 H8 Q6.5 1.5 6.5 3 M6.5 26 Q6.5 27.5 8 27.5 H12" stroke="#fff" stroke-width="3.4" fill="none"/><path d="M1 1.5 H5 Q6.5 1.5 6.5 3 V26 Q6.5 27.5 5 27.5 H1 M12 1.5 H8 Q6.5 1.5 6.5 3 M6.5 26 Q6.5 27.5 8 27.5 H12" stroke="#111" stroke-width="2.1" fill="none"/></svg><div style="left:1169.5px;top:287px;width:131.5px;height:34.5px;border:1.5px solid #2f8fc8;border-radius:4px;background:linear-gradient(#f3f3f3 0%,#ececec 46%,#dcdcdc 52%,#cfcfcf 100%);box-shadow:inset 0 0 0 1.5px #49c4f2, inset 0 0 0 2.5px rgba(255,255,255,.6)"></div><span class="t " id="t39" style="left:1222px;top:291.5px;height:27px;line-height:27px;font-size:19.5px;color:#101010;transform:scaleX(0.8214);">OK</span><span class="t " id="t40" style="left:657px;top:332px;height:27px;line-height:27px;font-size:19.5px;color:#101010;transform:scaleX(0.8404);">タイプ(T) :</span><div class="btn" style="left:747.5px;top:330px;width:199.5px;height:34px;"></div><span class="t " id="t41" style="left:754px;top:333px;height:27px;line-height:27px;font-size:19.5px;color:#101010;transform:scaleX(0.7340);">ムービークリップ</span><svg style="left:927.5px;top:344.6px" width="11.5" height="6.6" viewBox="0 0 15 8"><path d="M0 0H15L7.5 7.5Z" fill="#0a0a0a"/></svg><span class="t " id="t42" style="left:972px;top:332.5px;height:27px;line-height:27px;font-size:19.5px;color:#101010;transform:scaleX(1.0052);">基準点(R) :</span><div style="left:1079.5px;top:335.3px;width:9.6px;height:9.6px;border:2px solid #0a0a0a;background:#fff"></div><div style="left:1091px;top:335.3px;width:9.6px;height:9.6px;border:2px solid #0a0a0a;background:#fff"></div><div style="left:1102.5px;top:335.3px;width:9.6px;height:9.6px;border:2px solid #0a0a0a;background:#fff"></div><div style="left:1079.5px;top:346.8px;width:9.6px;height:9.6px;border:2px solid #0a0a0a;background:#fff"></div><div style="left:1091px;top:346.8px;width:9.6px;height:9.6px;border:2px solid #0a0a0a;background:#000"></div><div style="left:1102.5px;top:346.8px;width:9.6px;height:9.6px;border:2px solid #0a0a0a;background:#fff"></div><div style="left:1079.5px;top:358.3px;width:9.6px;height:9.6px;border:2px solid #0a0a0a;background:#fff"></div><div style="left:1091px;top:358.3px;width:9.6px;height:9.6px;border:2px solid #0a0a0a;background:#fff"></div><div style="left:1102.5px;top:358.3px;width:9.6px;height:9.6px;border:2px solid #0a0a0a;background:#fff"></div><div class="btn" style="left:1169.5px;top:331.5px;width:131.5px;height:34.5px;"></div><span class="t " id="t43" style="left:1195px;top:335px;height:27px;line-height:27px;font-size:19.5px;color:#101010;transform:scaleX(0.8061);">キャンセル</span><span class="t " id="t44" style="left:666.5px;top:379.5px;height:27px;line-height:27px;font-size:19.5px;color:#101010;transform:scaleX(0.7809);">フォルダ :</span><span class="t " id="t45" style="left:749px;top:379.5px;height:27px;line-height:27px;font-size:19.5px;color:#0a18e8;transform:scaleX(0.7404);text-decoration:underline;text-underline-offset:2px;text-decoration-thickness:1.6px">ライブラリルート</span><div class="btn" style="left:1169.5px;top:402.5px;width:131.5px;height:34.5px;"></div><span class="t " id="t46" style="left:1213.5px;top:406.5px;height:27px;line-height:27px;font-size:19.5px;color:#101010;transform:scaleX(1.0128);">基本</span><div class="chk" style="left:647px;top:491px;width:21px;height:21px;"></div><span class="t " id="t47" style="left:674px;top:488px;height:27px;line-height:27px;font-size:19.5px;color:#101010;transform:scaleX(0.8724);">9 スライスの拡大/縮小のためのガイドを有効にする(G)</span><div class="grp" style="left:647px;top:540.5px;width:618.5px;height:221px;"></div><div style="left:655px;top:534px;width:85px;height:14px;background:#f0f0f0"></div><span class="t " id="t48" style="left:660px;top:526.5px;height:27px;line-height:27px;font-size:19.5px;color:#101010;transform:scaleX(0.7835);">リンケージ</span><div class="chk" style="left:780px;top:554px;width:21px;height:20.5px;"></div><span class="t " id="t49" style="left:806.5px;top:551px;height:27px;line-height:27px;font-size:19.5px;color:#101010;transform:scaleX(0.9067);">ActionScript 用に書き出し(X)</span><div class="chk dis" style="left:780px;top:583.5px;width:21px;height:20.5px;"></div><span class="t " id="t50" style="left:806.5px;top:581.5px;height:27px;line-height:27px;font-size:19.5px;color:#9a9a9a;transform:scaleX(0.8626);">1 フレーム目に書き出し</span><span class="t " id="t51" style="left:675px;top:624px;height:27px;line-height:27px;font-size:19.5px;color:#9a9a9a;transform:scaleX(1.0682);">識別子(I) :</span><div class="inp" style="left:779.5px;top:618px;width:347px;height:37.5px;"></div><span class="t " id="t52" style="left:689px;top:672.5px;height:27px;line-height:27px;font-size:19.5px;color:#9a9a9a;transform:scaleX(0.8333);">クラス(C) :</span><div class="inp" style="left:779.5px;top:667.5px;width:347px;height:37.5px;"></div><span class="t " id="t53" style="left:675px;top:720px;height:27px;line-height:27px;font-size:19.5px;color:#9a9a9a;transform:scaleX(0.8704);">基本クラス :</span><div class="inp" style="left:779.5px;top:716px;width:347px;height:37.5px;"></div><svg style="left:1148px;top:677px" width="19" height="18" viewBox="0 0 19 18"><path d="M2.5 10.5 L7 15 L16.5 2.5" stroke="#d0d0d0" stroke-width="2.2" fill="none"/></svg><svg style="left:1187px;top:673px" width="26" height="26" viewBox="0 0 26 26"><g transform="rotate(46 13 13)"><rect x="10.4" y="-1" width="5.2" height="4.6" rx="1.6" fill="#f0f0f0" stroke="#c4c4c4" stroke-width="1.5"/><rect x="10.4" y="3.6" width="5.2" height="15" fill="#f8f8f8" stroke="#c4c4c4" stroke-width="1.5"/><path d="M10.4 18.6 L13 26 L15.6 18.6Z" fill="#d8d8d8" stroke="#c4c4c4" stroke-width="1.5"/></g></svg><svg style="left:1148px;top:725px" width="19" height="18" viewBox="0 0 19 18"><path d="M2.5 10.5 L7 15 L16.5 2.5" stroke="#d0d0d0" stroke-width="2.2" fill="none"/></svg><svg style="left:1187px;top:721px" width="26" height="26" viewBox="0 0 26 26"><g transform="rotate(46 13 13)"><rect x="10.4" y="-1" width="5.2" height="4.6" rx="1.6" fill="#f0f0f0" stroke="#c4c4c4" stroke-width="1.5"/><rect x="10.4" y="3.6" width="5.2" height="15" fill="#f8f8f8" stroke="#c4c4c4" stroke-width="1.5"/><path d="M10.4 18.6 L13 26 L15.6 18.6Z" fill="#d8d8d8" stroke="#c4c4c4" stroke-width="1.5"/></g></svg><div class="grp" style="left:643.5px;top:787.5px;width:622px;height:140.5px;"></div><div style="left:653px;top:781px;width:47px;height:14px;background:#f0f0f0"></div><span class="t " id="t54" style="left:658px;top:774.5px;height:27px;line-height:27px;font-size:19.5px;color:#101010;transform:scaleX(0.9615);">共有</span><div class="chk" style="left:780px;top:804px;width:21px;height:20.5px;"></div><span class="t " id="t55" style="left:806.5px;top:801px;height:27px;line-height:27px;font-size:19.5px;color:#101010;transform:scaleX(0.8737);">ランタイム共有用に書き出し(O)</span><div class="chk" style="left:780px;top:833.5px;width:21px;height:20.5px;"></div><span class="t " id="t56" style="left:806.5px;top:830.5px;height:27px;line-height:27px;font-size:19.5px;color:#101010;transform:scaleX(0.8918);">ランタイム共有用に読み込み(M)</span><span class="t " id="t57" style="left:699px;top:873px;height:27px;line-height:27px;font-size:19.5px;color:#9a9a9a;transform:scaleX(0.9091);">URL(U) :</span><div class="inp" style="left:779.5px;top:868.5px;width:438px;height:37px;"></div><div class="grp" style="left:643.5px;top:951px;width:622px;height:149.5px;"></div><div style="left:652px;top:945px;width:56px;height:14px;background:#f0f0f0"></div><span class="t " id="t58" style="left:656px;top:938px;height:27px;line-height:27px;font-size:19.5px;color:#101010;transform:scaleX(0.8276);">ソース</span><div style="left:651px;top:972.5px;width:130.5px;height:34px;border:1.4px solid #b0b0b0;border-radius:4px;background:#f4f4f4;box-shadow:inset 0 0 0 1px #fcfcfc"></div><span class="t " id="t59" style="left:674px;top:977px;height:27px;line-height:27px;font-size:19.5px;color:#9a9a9a;transform:scaleX(1.0185);">参照(B)...</span><span class="t " id="t60" style="left:798.5px;top:973.5px;height:27px;line-height:27px;font-size:19.5px;color:#101010;transform:scaleX(0.7753);">ファイル :</span><div style="left:651px;top:1015.5px;width:130.5px;height:34px;border:1.4px solid #b0b0b0;border-radius:4px;background:#f4f4f4;box-shadow:inset 0 0 0 1px #fcfcfc"></div><span class="t " id="t61" style="left:660px;top:1019.5px;height:27px;line-height:27px;font-size:19.5px;color:#9a9a9a;transform:scaleX(0.8875);">シンボル(S)...</span><span class="t " id="t62" style="left:798.5px;top:1016.5px;height:27px;line-height:27px;font-size:19.5px;color:#101010;transform:scaleX(0.8822);">シンボル名 : シンボル 1</span><div class="chk dis" style="left:800px;top:1063.5px;width:21px;height:20.5px;"></div><span class="t " id="t63" style="left:826px;top:1061px;height:27px;line-height:27px;font-size:19.5px;color:#9a9a9a;transform:scaleX(0.8442);">パブリッシュ前に常に更新(P)</span>
</body></html>
